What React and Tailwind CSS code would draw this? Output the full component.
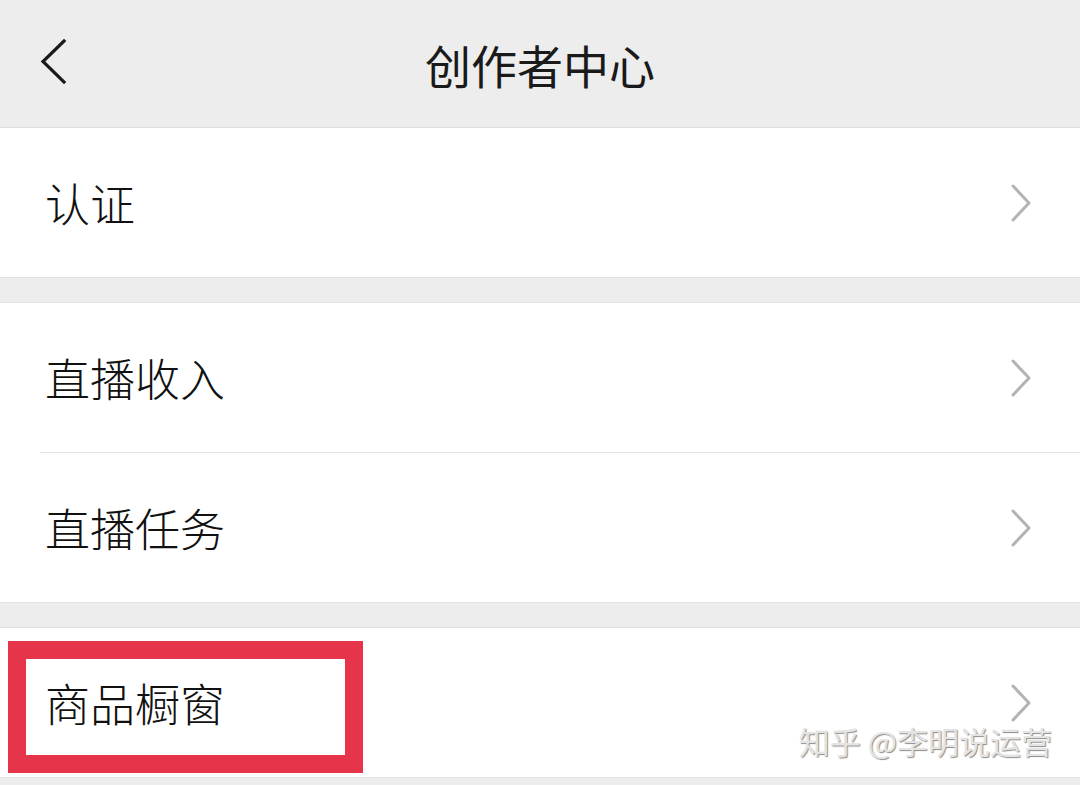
import React from "react";

const font = { fontFamily: '"Noto Sans CJK SC", "Noto Sans", sans-serif' };

function Chevron() {
  return (
    <svg width="22" height="38" viewBox="0 0 22 38" className="shrink-0">
      <path d="M3 2 L19 19 L3 36" fill="none" stroke="#b3b3b3" strokeWidth="3" strokeLinecap="round" strokeLinejoin="round" />
    </svg>
  );
}

function Row({ label, boxed, children }) {
  return (
    <div className="relative h-[149px] flex items-center justify-between pl-[45px] pr-[48px] bg-white">
      {boxed && (
        <div className="absolute left-[8px] top-[13px] w-[355px] h-[132px] border-[18px] border-[#e6344a]" />
      )}
      <span className="relative text-[45px] font-light leading-none text-[#111111]">{label}</span>
      <Chevron />
      {children}
    </div>
  );
}

export default function App() {
  return (
    <div className="w-[1080px] h-[785px] overflow-hidden bg-[#ededed]" style={font}>
      {/* Header */}
      <div className="relative h-[128px] flex items-center justify-center border-b border-[#dcdcdc] bg-[#ededed]">
        <svg width="30" height="48" viewBox="0 0 30 48" className="absolute left-[38px] top-[38px]">
          <path d="M26 3 L5 23.5 L26 44" fill="none" stroke="#1a1a1a" strokeWidth="3.2" strokeLinecap="square" />
        </svg>
        <span className="text-[46px] font-normal leading-none text-[#1a1a1a]">创作者中心</span>
      </div>

      {/* Section 1 */}
      <div className="border-b border-[#e2e2e2]">
        <Row label="认证" />
      </div>

      <div className="h-[24px]" />

      {/* Section 2 */}
      <div className="border-y border-[#e2e2e2] bg-white">
        <Row label="直播收入" />
        <div className="h-[1px] ml-[40px] bg-[#e2e2e2]" />
        <Row label="直播任务" />
      </div>

      <div className="h-[24px]" />

      {/* Section 3 */}
      <div className="border-y border-[#e2e2e2] bg-white">
        <Row label="商品橱窗" boxed>
          <span
            className="absolute right-[28px] top-[97px] text-[31px] leading-none text-[#e4e4e4]"
            style={{ textShadow: "1px 1px 1px #8d8d8d" }}
          >
            知乎 @李明说运营
          </span>
        </Row>
      </div>
    </div>
  );
}
